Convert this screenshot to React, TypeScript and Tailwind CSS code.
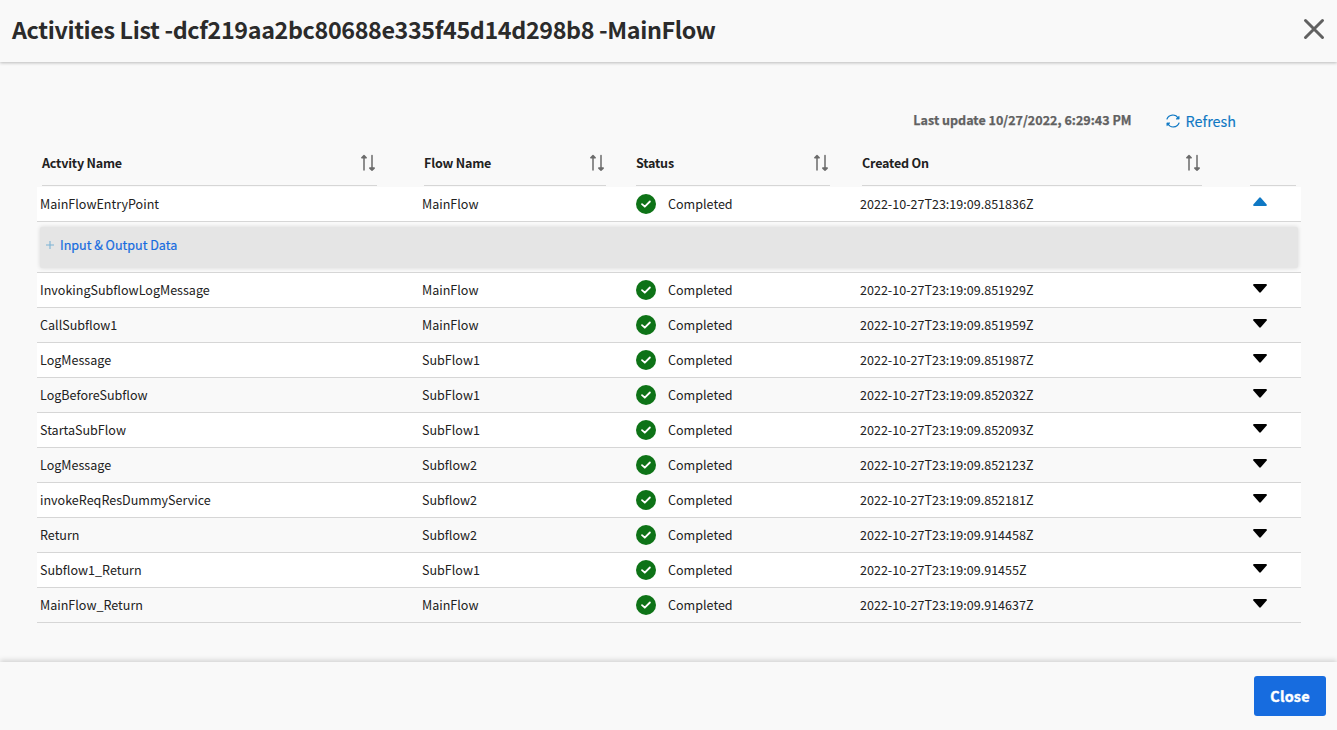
import React from "react";

type Activity = { name: string; flow: string; created: string; open?: boolean };

const activities: Activity[] = [
  { name: "MainFlowEntryPoint", flow: "MainFlow", created: "2022-10-27T23:19:09.851836Z", open: true },
  { name: "InvokingSubflowLogMessage", flow: "MainFlow", created: "2022-10-27T23:19:09.851929Z" },
  { name: "CallSubflow1", flow: "MainFlow", created: "2022-10-27T23:19:09.851959Z" },
  { name: "LogMessage", flow: "SubFlow1", created: "2022-10-27T23:19:09.851987Z" },
  { name: "LogBeforeSubflow", flow: "SubFlow1", created: "2022-10-27T23:19:09.852032Z" },
  { name: "StartaSubFlow", flow: "SubFlow1", created: "2022-10-27T23:19:09.852093Z" },
  { name: "LogMessage", flow: "Subflow2", created: "2022-10-27T23:19:09.852123Z" },
  { name: "invokeReqResDummyService", flow: "Subflow2", created: "2022-10-27T23:19:09.852181Z" },
  { name: "Return", flow: "Subflow2", created: "2022-10-27T23:19:09.914458Z" },
  { name: "Subflow1_Return", flow: "SubFlow1", created: "2022-10-27T23:19:09.91455Z" },
  { name: "MainFlow_Return", flow: "MainFlow", created: "2022-10-27T23:19:09.914637Z" },
];

function SortIcon() {
  return (
    <svg width="16" height="18" viewBox="0 0 16 18" fill="none" stroke="#6b6b6b" strokeWidth="1.5" strokeLinecap="round" strokeLinejoin="round">
      <path d="M4 16V2M1.8 3.7 4 1.6l2.2 2.1Z" />
      <path d="M12 1.5v14M9.8 14.1 12 16.2l2.2-2.1Z" />
    </svg>
  );
}

function CheckBadge() {
  return (
    <svg width="20" height="20" viewBox="0 0 20 20" fill="none">
      <circle cx="10" cy="10" r="10" fill="#0e7317" />
      <path d="M6 10.1 8.8 12.7 13.9 7.5" stroke="#fff" strokeWidth="1.8" strokeLinecap="round" strokeLinejoin="round" />
    </svg>
  );
}

function Caret({ open }: { open?: boolean }) {
  return open ? (
    <svg width="14" height="9" viewBox="0 0 14 9">
      <path d="M.3 7.4 6.2.7Q7 0 7.8.7l5.9 6.7Q14.3 9 12.8 9H1.2Q-.3 9 .3 7.4Z" fill="#0f78c4" />
    </svg>
  ) : (
    <svg width="14" height="9" viewBox="0 0 14 9">
      <path d="M.3 1.6 6.2 8.3Q7 9 7.8 8.3l5.9-6.7Q14.3 0 12.8 0H1.2Q-.3 0 .3 1.6Z" fill="#000" />
    </svg>
  );
}

function RefreshIcon() {
  return (
    <svg width="14" height="14" viewBox="0 0 14 14" fill="none" stroke="#0f78c4" strokeWidth="1.2" strokeLinecap="round" strokeLinejoin="round">
      <path d="M1 5A6.2 6.2 0 0 1 12.2 4.2" />
      <path d="M13 9A6.2 6.2 0 0 1 1.8 9.8" />
      <path d="M13.1 2.6V5.1H10.4ZM.9 11.4V8.9H3.6Z" fill="#0f78c4" strokeWidth="0.7" />
    </svg>
  );
}

function HeaderCell({ label, className }: { label: string; className: string }) {
  return (
    <div className={`flex h-[46px] justify-between border-b border-[#d6d6d6] ${className}`}>
      <span className="mt-[13px] leading-5">{label}</span>
      <span className="mt-[14px] mr-px">
        <SortIcon />
      </span>
    </div>
  );
}

export default function App() {
  return (
    <div className="flex h-[730px] w-[1337px] flex-col overflow-hidden bg-[#f9f9f9] font-['Noto_Sans_CJK_SC',sans-serif] text-[12.55px] whitespace-nowrap text-[#212121]">
      <header className="flex h-[62px] shrink-0 justify-between pr-3 pl-3 shadow-[0_1px_3px_rgba(0,0,0,0.25)]">
        <h1 className="mt-[13px] text-[23.3px] leading-8 font-bold tracking-[-0.36px] text-[#2b2b2b]">
          Activities List -dcf219aa2bc80688e335f45d14d298b8 -MainFlow
        </h1>
        <button aria-label="Close dialog" className="mt-[18px] h-[22px] w-[22px]">
          <svg width="22" height="22" viewBox="0 0 22 22" stroke="#616161" strokeWidth="3" strokeLinecap="round">
            <path d="M2.5 2.5 19.5 19.5M19.5 2.5 2.5 19.5" />
          </svg>
        </button>
      </header>

      <main className="flex-1 pr-9 pl-[37px]">
        <div className="flex h-[78px] justify-end pr-[65px]">
          <span className="mt-[48px] mr-[34px] text-[12.55px] leading-5 font-bold text-[#616161] [-webkit-text-stroke:0.25px_#616161]">
            Last update 10/27/2022, 6:29:43 PM
          </span>
          <button className="mt-[49px] flex h-5 items-center gap-[6px] text-[14.4px] leading-5 text-[#0f78c4] [-webkit-text-stroke:0.15px_#0f78c4]">
            <RefreshIcon />
            Refresh
          </button>
        </div>

        <div className="flex h-[47px] pl-[5px] font-bold tracking-[-0.2px]">
          <HeaderCell label="Actvity Name" className="mr-[47px] w-[335px]" />
          <HeaderCell label="Flow Name" className="mr-[30px] w-[182px]" />
          <HeaderCell label="Status" className="mr-8 w-[194px]" />
          <HeaderCell label="Created On" className="mr-12 w-[340px]" />
          <div className="h-[46px] w-[46px] border-b border-[#d6d6d6]" />
        </div>

        {activities.map((a, i) => (
          <React.Fragment key={a.created}>
            <div className={`grid h-[35px] grid-cols-[382px_214px_224px_390px_1fr] border-b border-[#d6d6d6] pl-[3px] ${a.open || i % 2 === 1 ? "bg-white" : ""}`}>
              <span className="mt-[7px] leading-5">{a.name}</span>
              <span className="mt-[7px] leading-5">{a.flow}</span>
              <span className="mt-[7px] flex gap-3 leading-5">
                <CheckBadge />
                Completed
              </span>
              <span className="mt-[7px] leading-5">{a.created}</span>
              <span className={`ml-[3px] ${a.open ? "mt-[10px]" : "mt-[11px]"}`}>
                <Caret open={a.open} />
              </span>
            </div>
            {a.open && (
              <div className="h-[51px] border-b border-[#d6d6d6] px-[3px] pt-[5px]">
                <div className="flex h-[41px] rounded-[2px] bg-[#e5e5e5] pl-[6px] shadow-[0_0_4px_rgba(0,0,0,0.14)]">
                  <svg width="8" height="8" viewBox="0 0 8 8" stroke="#7db4d5" strokeWidth="1.1" className="mt-[14px]">
                    <path d="M4 0v8M0 4h8" />
                  </svg>
                  <span className="mt-[8px] ml-[6px] leading-5 text-[#176cdf] [-webkit-text-stroke:0.2px_#176cdf]">Input &amp; Output Data</span>
                </div>
              </div>
            )}
          </React.Fragment>
        ))}
      </main>

      <footer className="flex h-[68px] shrink-0 justify-end bg-[#f9f9f9] pt-[14px] pr-[11px] shadow-[0_-2px_5px_rgba(0,0,0,0.15)]">
        <button className="h-10 w-[72px] rounded-[3px] bg-[#176cdf] text-[14.4px] font-bold tracking-[0.2px] text-white [-webkit-text-stroke:0.4px_#fff]">Close</button>
      </footer>
    </div>
  );
}
